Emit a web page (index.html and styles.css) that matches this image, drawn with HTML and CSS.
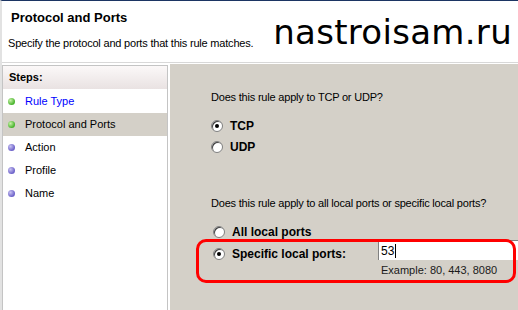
FILE: index.html
```html
<!DOCTYPE html>
<html lang="en">
<head>
    <meta charset="UTF-8">
    <title>Protocol and Ports</title>
    <link rel="stylesheet" href="styles.css">
</head>
<body>

<div class="wizard">
    <header class="wizard-header">
        <div class="header-text">
            <h1>Protocol and Ports</h1>
            <p>Specify the protocol and ports that this rule matches.</p>
        </div>
        <div class="watermark">nastroisam.ru</div>
    </header>

    <div class="wizard-body">
        <div class="steps">
            <div class="steps-title">Steps:</div>
            <ul class="steps-list">
                <li class="done link"><span class="dot"></span>Rule Type</li>
                <li class="done current"><span class="dot"></span>Protocol and Ports</li>
                <li><span class="dot"></span>Action</li>
                <li><span class="dot"></span>Profile</li>
                <li><span class="dot"></span>Name</li>
            </ul>
        </div>

        <div class="content">
            <p class="question">Does this rule apply to TCP or UDP?</p>
            <div class="radio-group">
                <label class="radio"><span class="radio-box checked"></span>TCP</label>
                <label class="radio"><span class="radio-box"></span>UDP</label>
            </div>

            <p class="question second">Does this rule apply to all local ports or specific local ports?</p>
            <div class="radio-group ports">
                <label class="radio"><span class="radio-box"></span>All local ports</label>
                <div class="port-row">
                    <label class="radio"><span class="radio-box checked"></span>Specific local ports:</label>
                    <div class="port-field">
                        <div class="port-input">53<span class="caret"></span></div>
                        <div class="port-hint">Example: 80, 443, 8080</div>
                    </div>
                </div>
            </div>

            <div class="highlight"></div>
        </div>
    </div>
</div>

</body>
</html>
```

FILE: styles.css
```css
body {
    margin: 0;
    width: 518px;
    height: 310px;
    overflow: hidden;
    background: #fff;
    font-family: "Liberation Sans", Arial, sans-serif;
    font-size: 11px;
    color: #000;
}

.wizard {
    height: 310px;
    border-top: 1px solid #1c3563;
    border-left: 2px solid #e2e2e2;
    box-sizing: border-box;
    display: flex;
    flex-direction: column;
}

.wizard-header {
    height: 61px;
    border-bottom: 1px solid #d8d8d8;
    display: flex;
    justify-content: space-between;
    align-items: flex-start;
}

.header-text h1 {
    margin: 9px 0 0 9px;
    font-size: 13px;
    font-weight: bold;
    line-height: 16px;
}

.header-text p {
    margin: 10px 0 0 6px;
    line-height: 14px;
    letter-spacing: -0.2px;
}

.watermark {
    font-family: "DejaVu Sans", sans-serif;
    font-size: 34px;
    line-height: 34px;
    margin: 14px 6px 0 0;
    letter-spacing: 0.3px;
}

.wizard-body {
    flex: 1;
    display: flex;
    padding-top: 1px;
}

.steps {
    width: 166px;
    margin-top: 1px;
    border: 1px solid #c4c4c4;
    border-bottom: none;
    box-sizing: border-box;
    margin-right: 2px;
}

.steps-title {
    height: 23px;
    line-height: 23px;
    padding-left: 6px;
    font-weight: bold;
    background: linear-gradient(to bottom, #fbf8f8, #e9e2e2);
}

.steps-list {
    list-style: none;
    margin: 1px 0 0;
    padding: 0;
}

.steps-list li {
    height: 23px;
    line-height: 23px;
    padding-left: 5px;
    display: flex;
    align-items: center;
}

.steps-list li.link {
    color: #0000ff;
}

.steps-list li.current {
    background: #d4d0c8;
}

.dot {
    width: 7px;
    height: 7px;
    border-radius: 50%;
    margin-right: 10px;
    background: radial-gradient(circle at 35% 35%, #c9c3f2, #6a5fc8 70%);
}

.done .dot {
    background: radial-gradient(circle at 35% 35%, #c8f2a8, #45b22a 70%);
}

.content {
    flex: 1;
    position: relative;
    background: #d4d0c8;
    padding: 26px 0 0 41px;
}

.question {
    margin: 0;
    line-height: 14px;
    letter-spacing: -0.2px;
}

.question.second {
    margin-top: 42px;
}

.radio-group {
    margin-top: 15px;
    display: flex;
    flex-direction: column;
    gap: 7px;
}

.radio-group.ports {
    margin-left: 2px;
    margin-top: 15px;
    gap: 7px;
}

.radio {
    display: flex;
    align-items: center;
    font-weight: bold;
    font-size: 12px;
    line-height: 14px;
}

.radio-box {
    width: 10px;
    height: 10px;
    border-radius: 50%;
    background: #fff;
    border: 1px solid #808080;
    box-shadow: inset 1px 1px 0 #404040;
    margin-right: 7px;
    position: relative;
}

.radio-box.checked::after {
    content: "";
    position: absolute;
    left: 3px;
    top: 3px;
    width: 4px;
    height: 4px;
    border-radius: 50%;
    background: #000;
}

.port-row {
    display: flex;
    align-items: flex-start;
}

.port-row .radio {
    width: 165px;
    margin-top: 1px;
}

.port-field {
    flex: 1;
    margin-top: -6px;
}

.port-input {
    height: 20px;
    background: #fff;
    border-top: 1px solid #808080;
    border-left: 1px solid #808080;
    box-sizing: border-box;
    font-size: 12px;
    line-height: 18px;
    padding-left: 2px;
    display: flex;
    align-items: center;
}

.caret {
    width: 1px;
    height: 14px;
    background: #000;
    margin-left: 1px;
}

.port-hint {
    margin: 3px 0 0 3px;
    font-size: 11px;
    line-height: 14px;
    color: #1a1a1a;
}

.highlight {
    position: absolute;
    left: 26px;
    top: 175px;
    width: 320px;
    height: 44px;
    border: 3px solid #f00;
    border-radius: 10px;
    box-sizing: border-box;
}
```
